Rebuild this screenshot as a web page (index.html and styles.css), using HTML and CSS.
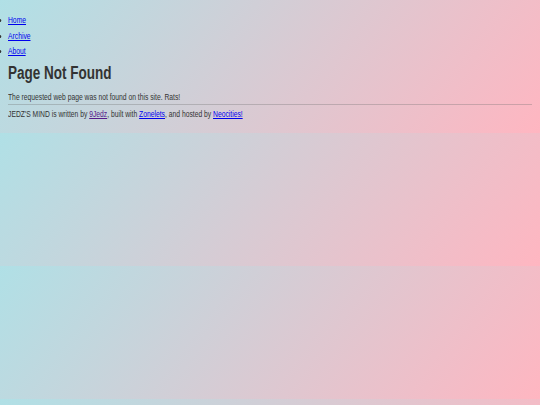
FILE: index.html
```html
<!DOCTYPE html>
<html lang="en">
<head>
<meta charset="utf-8">
<title>Page Not Found</title>
<link rel="stylesheet" href="styles.css">
</head>
<body>
  <nav class="nav">
    <ul class="nav-list narrow">
      <li class="nav-item"><a class="link" href="#home">Home</a></li>
      <li class="nav-item"><a class="link" href="#archive">Archive</a></li>
      <li class="nav-item"><a class="link" href="#about">About</a></li>
    </ul>
  </nav>
  <main class="main">
    <h1 class="title narrow">Page Not Found</h1>
    <p class="text narrow">The requested web page was not found on this site. Rats!</p>
  </main>
  <footer class="footer">
    <p class="footer-text narrow">JEDZ'S MIND is written by <a class="link link-visited" href="#jedz">9Jedz</a>, built with <a class="link" href="#zonelets">Zonelets</a>, and hosted by <a class="link" href="#neocities">Neocities!</a></p>
  </footer>
</body>
</html>
```

FILE: styles.css
```css
html {
  margin: 0;
  padding: 0;
}

body {
  margin: 0;
  padding: 15.2px 8.44px 13.9px 8.44px;
  background: linear-gradient(126.87deg, #b0e0e6, #ffb6c1);
  font-family: "Liberation Sans", Arial, sans-serif;
  font-size: 9px;
  line-height: 10.125px;
  color: #333;
}

.narrow {
  transform: scaleX(0.75);
  transform-origin: left center;
}

.nav-list {
  margin: 0;
  padding: 0;
  list-style: disc outside;
}

.nav-item + .nav-item {
  margin-top: 5.4px;
}

.link {
  color: #0000ee;
  text-decoration: underline;
}

.link-visited {
  color: #551a8b;
}

.main {
  display: flex;
  flex-direction: column;
}

.title {
  margin: 6.2px 0 0 0;
  font-size: 18px;
  line-height: 20.25px;
  font-weight: bold;
  color: #333;
}

.text {
  margin: 9px 0 0 0;
}

.footer {
  margin-top: 2.1px;
  padding-top: 3.9px;
  border-top: 1px solid rgba(110, 110, 110, 0.32);
}

.footer-text {
  margin: 0;
}
```
